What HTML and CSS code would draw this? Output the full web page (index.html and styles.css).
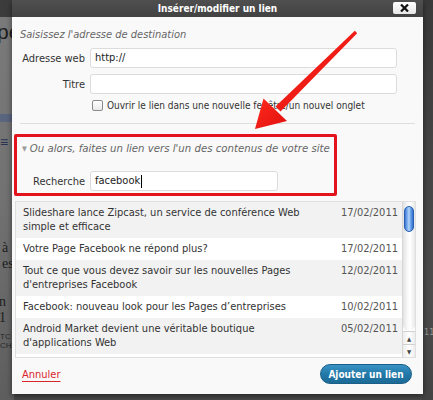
FILE: index.html
```html
<!DOCTYPE html>
<html lang="fr">
<head>
<meta charset="utf-8">
<title>Insérer/modifier un lien</title>
<link rel="stylesheet" href="styles.css">
</head>
<body>
<div class="bg-page">
  <div class="bg-big">pe</div>
  <div class="bg-bar"></div>
  <div class="bg-icon">≡</div>
  <div class="bg-txt t1">à</div>
  <div class="bg-txt t2">es</div>
  <div class="bg-txt t3">n 1</div>
  <div class="bg-small">TC<br>CHA</div>
</div>
<div class="bg-right"><span class="r1">11</span></div>

<div class="dialog">
  <div class="titlebar">
    <span class="title">Insérer/modifier un lien</span>
    <span class="close"><svg width="9" height="8" viewBox="0 0 9 8"><path d="M1 0.5 L8 7.5 M8 0.5 L1 7.5" stroke="#111" stroke-width="2.2" stroke-linecap="butt"/></svg></span>
  </div>
  <div class="body">
    <p class="heading">Saisissez l'adresse de destination</p>
    <div class="field">
      <span class="label">Adresse web</span>
      <div class="input">http://</div>
    </div>
    <div class="field">
      <span class="label">Titre</span>
      <div class="input"></div>
    </div>
    <div class="check">
      <span class="box"></span>
      <span class="check-text">Ouvrir le lien dans une nouvelle fenêtre/un nouvel onglet</span>
    </div>
    <div class="sep"></div>
    <p class="toggle"><span class="tri">▼</span>Ou alors, faites un lien vers l'un des contenus de votre site</p>
    <div class="field search">
      <span class="label">Recherche</span>
      <div class="input short">facebook<span class="caret"></span></div>
    </div>
    <div class="results">
      <ul class="items">
        <li class="item alt"><span class="item-title">Slideshare lance Zipcast, un service de conférence Web simple et efficace</span><span class="date">17/02/2011</span></li>
        <li class="item"><span class="item-title">Votre Page Facebook ne répond plus?</span><span class="date">17/02/2011</span></li>
        <li class="item alt"><span class="item-title">Tout ce que vous devez savoir sur les nouvelles Pages d'entreprises Facebook</span><span class="date">12/02/2011</span></li>
        <li class="item"><span class="item-title">Facebook: nouveau look pour les Pages d’entreprises</span><span class="date">10/02/2011</span></li>
        <li class="item alt"><span class="item-title">Android Market devient une véritable boutique d'applications Web</span><span class="date">05/02/2011</span></li>
      </ul>
      <div class="scrollbar">
        <div class="track"><div class="thumb"></div></div>
        <div class="arrow-btn">▲</div>
        <div class="arrow-btn">▼</div>
      </div>
    </div>
    <div class="footer">
      <a class="cancel" href="#">Annuler</a>
      <span class="submit">Ajouter un lien</span>
    </div>
  </div>
</div>

<div class="redbox"></div>
<svg class="arrow" width="433" height="400" viewBox="0 0 433 400">
  <defs>
    <linearGradient id="ag" x1="0" y1="0" x2="1" y2="1">
      <stop offset="0" stop-color="#ff2a1f"/>
      <stop offset="1" stop-color="#e0100c"/>
    </linearGradient>
  </defs>
  <polygon points="357.2,33.3 354.8,30.7 275.5,106.5 280.5,111.5" fill="url(#ag)"/>
  <polygon points="255,129 263.5,98.5 287,121" fill="url(#ag)"/>
</svg>
</body>
</html>
```
FILE: styles.css
```css
* { box-sizing: border-box; }
html, body { margin: 0; padding: 0; }
body {
  width: 433px;
  height: 400px;
  overflow: hidden;
  position: relative;
  background: #4a4a4a;
  font-family: "DejaVu Sans Condensed", "DejaVu Sans", sans-serif;
  font-stretch: semi-condensed;
  color: #333;
}
.bg-page {
  width: 14px;
  height: 400px;
  background: linear-gradient(to bottom, #3c3c3c 0, #3c3c3c 17px, #7a7a7a 17px, #727272 200px, #5e5e5e 400px);
  overflow: hidden;
  color: #1d1d1d;
  font-family: "Liberation Sans", sans-serif;
}
.bg-big { font-size: 21px; margin: 20px 0 0 -3px; line-height: 24px; }
.bg-bar { height: 8px; width: 14px; margin-top: 70px; background: #5a6680; }
.bg-icon { font-size: 14px; margin-top: 12px; color: #2a3555; }
.bg-txt { font-family: "Liberation Serif", serif; font-size: 14px; line-height: 16px; margin-left: 2px; }
.t1 { margin-top: 90px; }
.t2 { margin-top: 0; }
.t3 { margin-top: 22px; margin-left: -1px; }
.bg-small { font-size: 8px; line-height: 9px; margin-top: 6px; color: #2a2a2a; }
.bg-right {
  position: absolute;
  right: 0; top: 0;
  width: 11px; height: 400px;
  background: linear-gradient(to bottom, #3a3a3a 0, #454545 150px, #4c4c4c 300px, #444 400px);
  color: #999;
  font-size: 9px;
}
.r1 { position: absolute; top: 327px; left: 2px; }

.dialog {
  position: absolute;
  left: 12px;
  top: 0;
  width: 411px;
  height: 394px;
  background: #f9f9f9;
  display: flex;
  flex-direction: column;
  box-shadow: 0 2px 6px rgba(0,0,0,0.5);
}
.titlebar {
  height: 17px;
  background: linear-gradient(to bottom, #4f4f4f, #424242);
  display: flex;
  align-items: center;
  justify-content: center;
  position: relative;
}
.title {
  color: #fff;
  font-weight: bold;
  font-size: 10px;
  letter-spacing: 0;
}
.close {
  position: absolute;
  right: 7px;
  top: 2px;
  width: 23px;
  height: 12px;
  background: linear-gradient(to bottom, #ffffff, #e6e6e6);
  border-radius: 2px;
  display: flex;
  align-items: center;
  justify-content: center;
}
.body {
  flex: 1;
  display: flex;
  flex-direction: column;
  padding: 11px 7px 0 3px;
}
.heading {
  margin: 0 0 0 5px;
  font-style: italic;
  color: #666;
  font-size: 11px;
  line-height: 14px;
}
.field {
  display: flex;
  align-items: center;
  gap: 5px;
  margin-top: 6px;
}
.field + .field { margin-top: 6px; }
.label {
  width: 70px;
  text-align: right;
  font-size: 11px;
  color: #333;
}
.input {
  width: 307px;
  height: 20px;
  background: #fff;
  border: 1px solid #dcdcdc;
  border-radius: 3px;
  font-size: 11px;
  line-height: 18px;
  padding-left: 4px;
  color: #222;
  display: flex;
  align-items: center;
}
.input.short { width: 188px; }
.caret { display: inline-block; width: 1px; height: 13px; background: #000; margin-left: 1px; }
.check {
  display: flex;
  align-items: center;
  gap: 4px;
  margin: 5px 0 0 77px;
  height: 12px;
}
.box {
  width: 11px;
  height: 11px;
  border: 1px solid #8a8a8a;
  border-radius: 2px;
  background: linear-gradient(to bottom, #fff, #e9e9e9);
}
.check-text { font-size: 10px; color: #333; }
.sep {
  height: 1px;
  background: #dedede;
  margin: 12px 1px 0 5px;
}
.toggle {
  margin: 18px 0 0 7px;
  font-style: italic;
  color: #666;
  font-size: 11.3px;
  line-height: 14px;
  display: flex;
  align-items: center;
}
.tri { font-style: normal; font-size: 7px; color: #9a9a9a; margin-right: 3px; }
.field.search { margin-top: 15px; }
.results {
  margin-top: 10px;
  height: 157px;
  border: 1px solid #dfdfdf;
  background: #fff;
  display: flex;
  overflow: hidden;
}
.items {
  list-style: none;
  margin: 0;
  padding: 0;
  flex: 1;
}
.item {
  display: flex;
  gap: 24px;
  padding: 4px 4px 4px 7px;
  font-size: 11px;
  line-height: 14px;
  color: #333;
  background: #fff;
}
.item.alt { background: #f2f2f2; }
.item-title { flex: 1; }
.date { color: #555; white-space: nowrap; }
.scrollbar {
  width: 13px;
  display: flex;
  flex-direction: column;
  border-left: 1px solid #d6d6d6;
  background: #fff;
}
.track {
  flex: 1;
  background: linear-gradient(to right, #e2e2e2, #fafafa 40%, #fff 60%, #e8e8e8);
  border-radius: 0 0 6px 6px;
  padding: 4px 1px 0 1px;
}
.thumb {
  height: 26px;
  border-radius: 5px;
  border: 1px solid #2a5eb0;
  background: linear-gradient(to right, #3a78d4, #8ab9f2 35%, #b8d6f8 50%, #6aa2ea 70%, #2f6fcf);
}
.arrow-btn {
  height: 13px;
  font-size: 6px;
  line-height: 13px;
  text-align: center;
  color: #444;
  border-top: 1px solid #d0d0d0;
  background: linear-gradient(to right, #ededed, #fff 50%, #ececec);
}
.footer {
  flex: 1;
  display: flex;
  align-items: center;
  justify-content: space-between;
  padding: 0 4px 4px 7px;
}
.cancel {
  color: #d9262c;
  font-size: 11px;
  text-decoration: underline;
  text-underline-offset: 3px;
}
.submit {
  height: 20px;
  width: 92px;
  border-radius: 10px;
  background: linear-gradient(to bottom, #3a93c5, #2279a8 50%, #1c6a97);
  border: 1px solid #1b5f86;
  color: #fff;
  font-weight: bold;
  font-size: 10px;
  display: flex;
  align-items: center;
  justify-content: center;
}
.redbox {
  position: absolute;
  left: 14px;
  top: 134px;
  width: 323px;
  height: 62px;
  border: 3px solid #e3141b;
  border-radius: 2px;
}
.arrow {
  position: absolute;
  left: 0;
  top: 0;
  pointer-events: none;
}
```
